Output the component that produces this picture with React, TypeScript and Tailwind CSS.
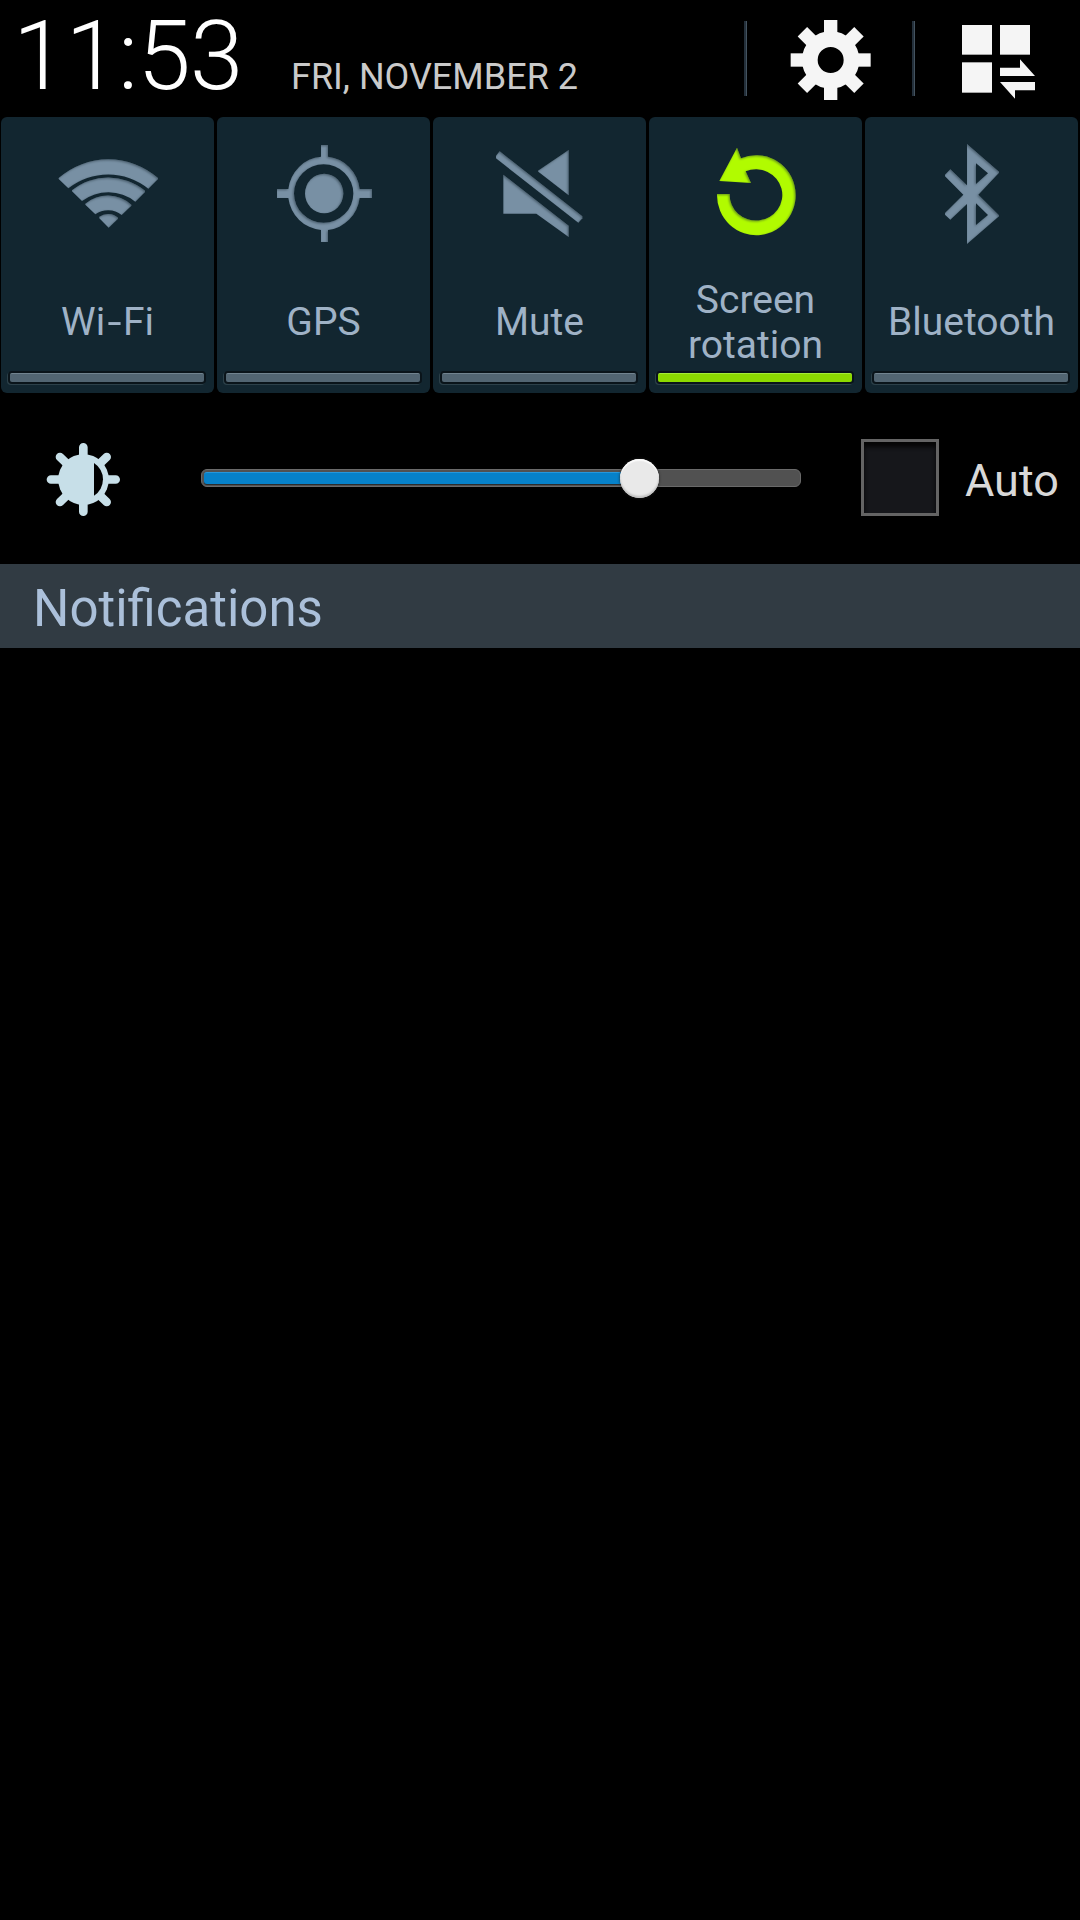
import type { ReactNode } from "react";

function InsetShade() {
  return (
    <svg className="absolute h-0 w-0" aria-hidden="true">
      <defs>
        <filter id="inset" x="-10%" y="-10%" width="120%" height="120%" colorInterpolationFilters="sRGB">
          <feComponentTransfer in="SourceAlpha" result="inverse">
            <feFuncA type="linear" slope="-1" intercept="1" />
          </feComponentTransfer>
          <feOffset in="inverse" dx="-4" dy="4" result="shifted" />
          <feGaussianBlur in="shifted" stdDeviation="3" result="soft" />
          <feFlood floodColor="#1c2c36" floodOpacity="0.5" />
          <feComposite in2="soft" operator="in" result="shade" />
          <feComposite in="shade" in2="SourceAlpha" operator="in" result="edge" />
          <feMerge>
            <feMergeNode in="SourceGraphic" />
            <feMergeNode in="edge" />
          </feMerge>
        </filter>
      </defs>
    </svg>
  );
}

type TileProps = {
  label: ReactNode;
  active?: boolean;
  viewBox: string;
  children: ReactNode;
};

function Tile({ label, active = false, viewBox, children }: TileProps) {
  return (
    <div className="flex h-[276px] w-[213px] flex-col rounded-[6px] bg-[#122630]">
      <svg viewBox={viewBox} className="h-[156px] w-[213px] shrink-0">
        <g filter="url(#inset)" fill={active ? "#b1fb00" : "#7890a4"}>
          {children}
        </g>
      </svg>
      <div className="flex h-[97px] items-center justify-center pt-[2px] text-center text-[39px] leading-[45px] text-[#9fb2c6]">
        <span>{label}</span>
      </div>
      <div
        className={
          active
            ? "mt-[3px] ml-[9px] h-[9px] w-[194px] rounded-[2px] border-t border-[#a5ec38] bg-[#8cd900] shadow-[0_0_0_2px_#0a141a,-1px_1px_0_2px_#2c4049]"
            : "mt-[3px] ml-[9px] h-[9px] w-[194px] rounded-[2px] border-t border-[#71838f] bg-[#526572] shadow-[0_0_0_2px_#0a141a,-1px_1px_0_2px_#2c4049]"
        }
      />
    </div>
  );
}

function GearIcon() {
  return (
    <svg viewBox="180 57 246 246" className="h-[82px] w-[82px]" fill="#f5f5f5">
      {[0, 45, 90, 135].map((a) => (
        <g key={a} transform={`rotate(${a} 302 180)`}>
          <rect x="282" y="60" width="40" height="50" />
          <rect x="282" y="250" width="40" height="50" />
        </g>
      ))}
      <circle cx="302" cy="180" r="62.5" fill="none" stroke="#f5f5f5" strokeWidth="47" />
    </svg>
  );
}

function GridSwapIcon() {
  return (
    <svg viewBox="696 72 222 228" className="h-[76px] w-[74px]" fill="#f5f5f5">
      <rect x="696" y="75" width="90" height="89" />
      <rect x="810" y="75" width="90" height="89" />
      <rect x="696" y="187" width="90" height="91" />
      <path d="M810 203H870V178L915 228H810Z" />
      <path d="M810 246H915V271H855V296Z" />
    </svg>
  );
}

function BrightnessIcon() {
  return (
    <svg viewBox="135 66 228 225" className="mt-[2px] h-[75px] w-[76px]">
      <g stroke="#c7dfe8" strokeWidth="26" strokeLinecap="round">
        <path d="M250 82V275M153 178.500H347M180 111L320 246M320 111L180 246" />
      </g>
      <circle cx="250.500" cy="178.500" r="76" fill="#c7dfe8" />
      <path d="M282 129A58 58 0 0 1 282 227Z" fill="#000" />
    </svg>
  );
}

export default function App() {
  return (
    <div className="h-[1920px] w-[1080px] overflow-hidden bg-black font-['Roboto',sans-serif]">
      <InsetShade />
      <header className="flex h-[117px] items-start">
        <div className="flex w-[744px] items-baseline pl-[13px]">
          <span className="w-[278px] text-[96px] leading-[112px] font-light tracking-[-0.7px] text-white">11:53</span>
          <span className="text-[36px] text-[#cacaca]">FRI, NOVEMBER 2</span>
        </div>
        <div className="mt-[21px] h-[75px] w-[3px] border-r border-[#44535f] bg-[#24303b]" />
        <div className="mt-[19px] ml-[43px] w-[122px]">
          <GearIcon />
        </div>
        <div className="mt-[21px] h-[75px] w-[3px] border-r border-[#44535f] bg-[#24303b]" />
        <div className="mt-6 ml-[47px]">
          <GridSwapIcon />
        </div>
      </header>

      <div className="flex gap-[3px] pl-px">
        <Tile
          label={
            <>
              Wi<span className="mx-[3.5px] inline-block scale-x-[1.3]">-</span>Fi
            </>
          }
          viewBox="3 21 639 468"
        >
          <path d="M176 204A226 226 0 0 1 474 204V207L445 236A192 192 0 0 0 205 235L176 207Z" />
          <path d="M216 241A173 173 0 0 1 435 242V246L406 275A132 132 0 0 0 246 273L216 244Z" />
          <path d="M256 281A105 105 0 0 1 394 284V287L365 315A66 66 0 0 0 286 313L256 284Z" />
          <path d="M298 320A45 45 0 0 1 354 323V326L326 353L298 325Z" />
        </Tile>
        <Tile label="GPS" viewBox="3 21 639 468">
          <path
            fillRule="evenodd"
            d="M315 105H336V140A108 111 0 0 1 431 237H468V264H431A108 111 0 0 1 336 360V396H315V360A108 111 0 0 1 217 264H183V237H217A108 111 0 0 1 315 140ZM234 250.500A89 87.500 0 0 0 412 250.500A89 87.500 0 0 0 234 250.500Z"
          />
          <ellipse cx="324.500" cy="250.500" rx="57.500" ry="59.500" />
        </Tile>
        <Tile label="Mute" viewBox="9 21 639 468">
          <path d="M198 137L209 124L457 319V325L445 338L198 145Z" />
          <path d="M324 182L416 120V256L325 185Z" />
          <path d="M220 194L416 347V381L319 311H220Z" />
        </Tile>
        <Tile label="Screen rotation" active viewBox="9 21 639 468">
          <path d="M213 252H251A79 77 0 1 0 299 184L315 219L220 213L273 113L285 145A118 120 0 1 1 213 252Z" />
        </Tile>
        <Tile label="Bluetooth" viewBox="15 21 639 468">
          <path
            fillRule="evenodd"
            d="M321 102L417 185V188L355 254L417 316V319L321 402V282L271 329L255 314V309L310 254L255 199V194L271 178L321 226ZM348 160V222L384 190ZM348 280V345L384 315Z"
          />
        </Tile>
      </div>

      <div className="flex h-[171px] items-center pl-[45px]">
        <BrightnessIcon />
        <div className="relative mb-[2px] ml-20 h-[18px] w-[600px] rounded-[6px] border border-[#6a6a6a] bg-[#515151]">
          <div className="mt-[2px] ml-[2px] h-3 w-[436px] rounded-l-[3px] border-t border-[#2597dc] bg-[#0681c9] shadow-[0_1px_0_0_#2b2b2b]" />
          <div className="absolute top-[-11px] left-[418px] h-[39px] w-[39px] rounded-full bg-[#e9e9e9] shadow-[inset_0_2px_1px_#fafafa,inset_0_-2px_2px_#c0c0c0,0_0_3px_#222]" />
        </div>
        <div className="mb-[2px] ml-[60px] h-[77px] w-[78px] border-[3px] border-[#646464] bg-[#16171b] shadow-[inset_0_5px_4px_#060606]" />
        <span className="mt-[4px] ml-[26px] text-[45px] leading-[53px] text-[#d8d8d8]">Auto</span>
      </div>

      <div className="flex h-[84px] items-center bg-[#313b43] pt-[5px] pl-[33px]">
        <span className="text-[51px] leading-[60px] text-[#abc0da]">Notifications</span>
      </div>
    </div>
  );
}
